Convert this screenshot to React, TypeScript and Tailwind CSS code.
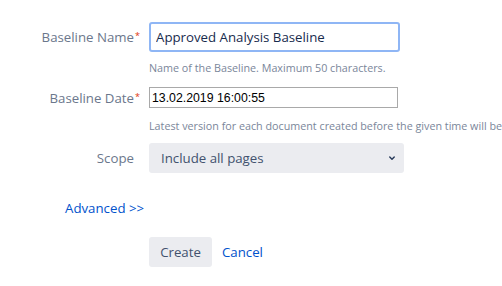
const Label = ({ text, required }: { text: string; required?: boolean }) => (
    <div className="w-[149px] flex justify-end items-center shrink-0 text-[#6b778c] whitespace-nowrap">
        <span>{text}</span>
        <span className="w-[15px] self-start pt-[4px] pl-[1px] text-[9px] leading-[9px] text-[#de350b]">{required ? "*" : ""}</span>
    </div>
)

const App = () => {
    return (
        <div className="w-[502px] h-[286px] bg-white overflow-hidden font-['Open_Sans',sans-serif] text-[13.25px] leading-[20px]">
            <div className="pt-[22px]">
                <div className="flex items-center h-[30px]">
                    <Label text="Baseline Name" required />
                    <input
                        className="w-[251px] h-[30px] rounded-[3px] border-2 border-[#8fb6f5] pl-[5px] text-[13.25px] text-[#172b4d] outline-none"
                        defaultValue="Approved Analysis Baseline"
                    />
                </div>
                <p className="ml-[149px] mt-[8px] h-[16px] leading-[16px] text-[10.75px] text-[#7a869a] whitespace-nowrap">Name of the Baseline. Maximum 50 characters.</p>

                <div className="flex items-center h-[21px] mt-[11px]">
                    <Label text="Baseline Date" required />
                    <input
                        className="w-[249px] h-[21px] border border-[#a9a9a9] px-[2px] text-[12.3px] text-black outline-none font-['Liberation_Sans',sans-serif]"
                        defaultValue="13.02.2019 16:00:55"
                    />
                </div>
                <p className="ml-[149px] mt-[10px] h-[16px] leading-[16px] text-[10.75px] text-[#7a869a] whitespace-nowrap">Latest version for each document created before the given time will be included.</p>

                <div className="flex items-center h-[30px] mt-[9px]">
                    <Label text="Scope" />
                    <div className="w-[255px] h-[30px] rounded-[3px] bg-[#ebecf0] flex items-center justify-between pl-[12px] pr-[5px] text-[#42526e]">
                        <span>Include all pages</span>
                        <svg width="14" height="14" viewBox="0 0 24 24">
                            <path d="M7.3 9.3a1.2 1.2 0 0 1 1.7 0L12 12.3l3-3a1.2 1.2 0 1 1 1.7 1.7l-3.85 3.85a1.2 1.2 0 0 1-1.7 0L7.3 11a1.2 1.2 0 0 1 0-1.7z" fill="#253858" />
                        </svg>
                    </div>
                </div>

                <div className="mt-[24px] pl-[65px] h-[22px] flex items-center">
                    <a href="#" className="text-[#0052cc]">Advanced &gt;&gt;</a>
                </div>

                <div className="mt-[18px] ml-[149px] flex items-center gap-[10px]">
                    <button className="h-[30px] w-[63px] rounded-[3px] bg-[#ebecf0] text-[#42526e]">Create</button>
                    <a href="#" className="text-[#0052cc]">Cancel</a>
                </div>
            </div>
        </div>
    )
}

export default App
